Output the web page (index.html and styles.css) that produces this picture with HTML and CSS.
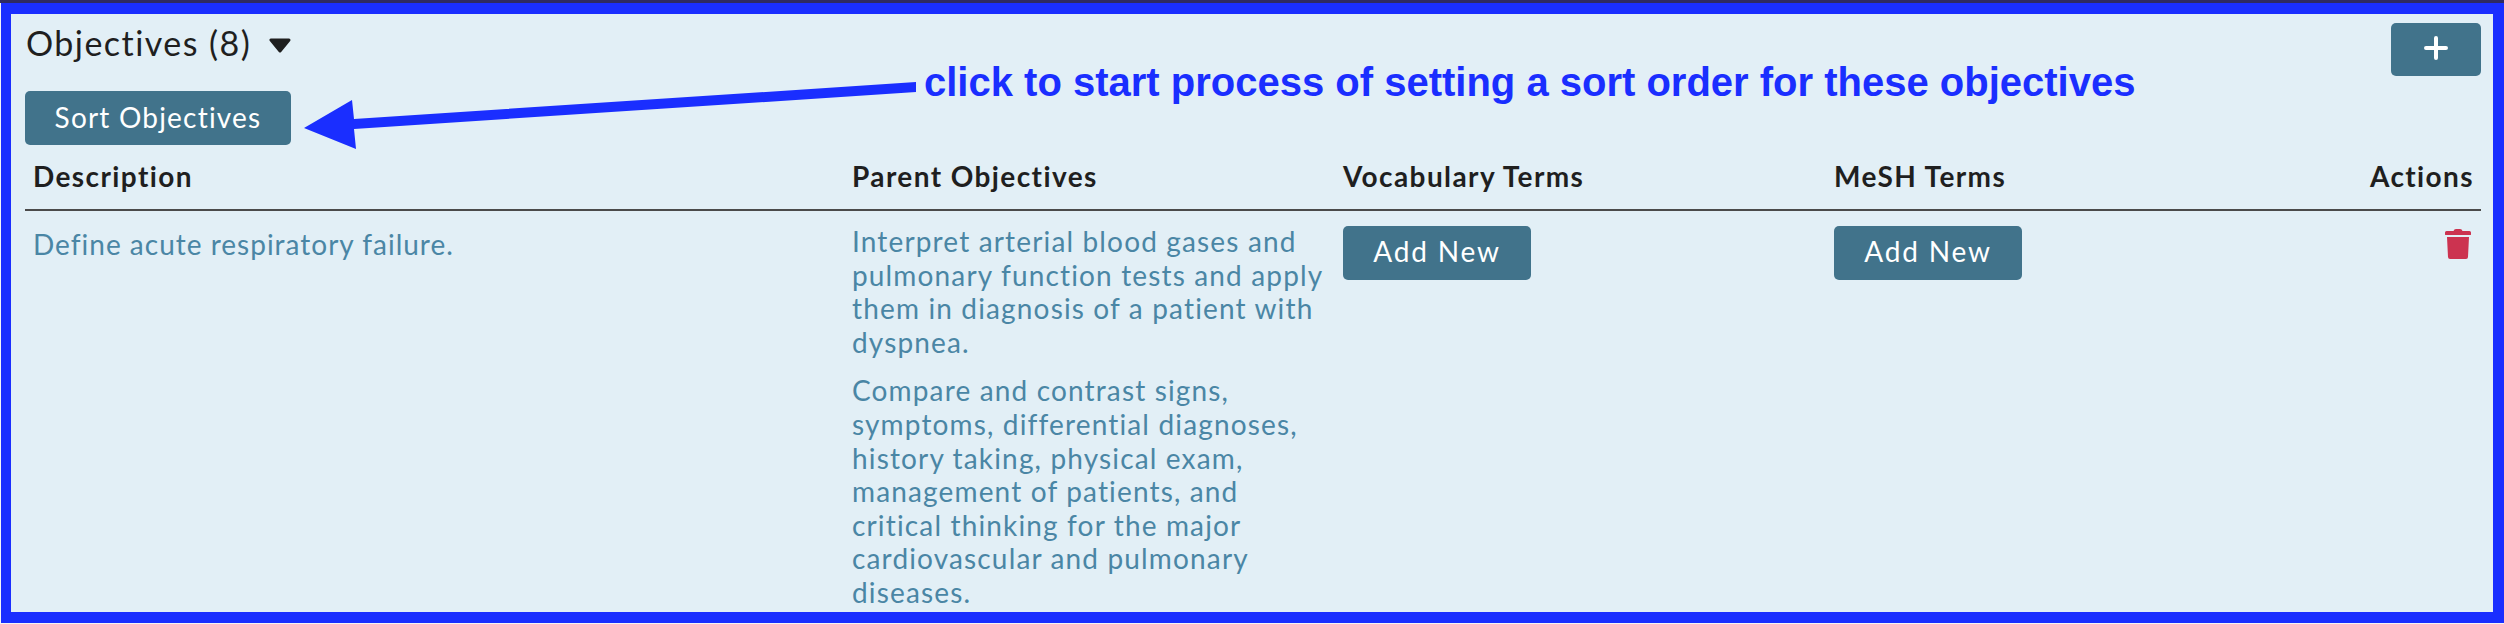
FILE: index.html
```html
<!DOCTYPE html>
<html lang="en">
<head>
  <meta charset="UTF-8">
  <title>Objectives</title>
  <link rel="stylesheet" href="styles.css">
</head>
<body>
  <div class="top-band"></div>
  <div class="frame">
    <div class="title-row">
      <h2 class="title">Objectives (8)
        <svg class="caret" width="22" height="15" viewBox="0 0 22 15"><path d="M2 2 H20 L11 13 Z" fill="#1f1f1f" stroke="#1f1f1f" stroke-width="3" stroke-linejoin="round"/></svg>
      </h2>
      <button class="btn btn-plus" aria-label="Add">
        <svg width="24" height="24" viewBox="0 0 24 24"><path d="M12 2 V22 M2 12 H22" stroke="#fff" stroke-width="4" stroke-linecap="round" fill="none"/></svg>
      </button>
    </div>
    <button class="btn btn-sort">Sort Objectives</button>
    <table class="objectives">
      <colgroup>
        <col class="col-desc">
        <col class="col-term">
        <col class="col-term">
        <col class="col-term">
        <col class="col-actions">
      </colgroup>
      <thead>
        <tr>
          <th>Description</th>
          <th>Parent Objectives</th>
          <th>Vocabulary Terms</th>
          <th>MeSH Terms</th>
          <th class="right">Actions</th>
        </tr>
      </thead>
      <tbody>
        <tr>
          <td class="desc">Define acute respiratory failure.</td>
          <td class="parents">
            <p>Interpret arterial blood gases and pulmonary function tests and apply them in diagnosis of a patient with dyspnea.</p>
            <p>Compare and contrast signs, symptoms, differential diagnoses, history taking, physical exam, management of patients, and critical thinking for the major cardiovascular and pulmonary diseases.</p>
          </td>
          <td class="terms"><button class="btn btn-add">Add New</button></td>
          <td class="terms"><button class="btn btn-add">Add New</button></td>
          <td class="right actions">
            <svg width="26" height="30" viewBox="0 0 26 30"><path d="M8.5 2 Q9 0 11 0 H15 Q17 0 17.500 2 H24.500 Q26 2 26 3.500 V5.500 Q26 6 25 6 H1 Q0 6 0 5.500 V3.500 Q0 2 1.500 2 Z M2 8 H24 L23 28 Q22.900 30 21 30 H5 Q3.100 30 3 28 Z" fill="#cc3350"/></svg>
          </td>
        </tr>
      </tbody>
    </table>

    <svg class="arrow" width="640" height="80" viewBox="0 0 640 80">
      <path d="M0 54 L48 26 L50 45 L612 8 L612 18 L50 55 L52 75 Z" fill="#1a2eff"/>
    </svg>
    <div class="note">click to start process of setting a sort order for these objectives</div>
  </div>
</body>
</html>
```

FILE: styles.css
```css
body {
  margin: 0;
  background: #f4f4f6;
  font-family: Lato, "Noto Sans", sans-serif;
}

.top-band {
  height: 3px;
  background: #2f2a62;
}

.frame {
  position: relative;
  box-sizing: border-box;
  height: 620px;
  margin-left: 1px;
  padding: 9px 12px 0 14px;
  overflow: hidden;
  background: #e2eff6;
  border: solid #1a2eff;
  border-width: 11px 11px 11px 10px;
}

.title-row {
  display: flex;
  justify-content: space-between;
  align-items: flex-start;
}

.title {
  margin: 0;
  padding-left: 1px;
  font-size: 34px;
  font-weight: 400;
  line-height: 40px;
  letter-spacing: 1.45px;
  color: #1f1f1f;
}

.caret {
  margin-left: 8px;
  vertical-align: 3px;
}

.btn {
  display: block;
  box-sizing: border-box;
  border: none;
  border-radius: 5px;
  background: #41738b;
  color: #fff;
  font-family: inherit;
  font-size: 28px;
  letter-spacing: 1.2px;
  padding: 0 0 4px;
}

.btn-plus {
  display: flex;
  align-items: center;
  justify-content: center;
  width: 90px;
  height: 53px;
}

.btn-sort {
  width: 266px;
  height: 54px;
  margin-top: 15px;
  padding-bottom: 2px;
}

.btn-add {
  width: 188px;
  height: 54px;
  letter-spacing: 1.8px;
}

.objectives {
  width: 2456px;
  table-layout: fixed;
  border-collapse: collapse;
  font-size: 28px;
  line-height: 33.6px;
  letter-spacing: 1px;
}

.col-desc { width: 818px; }
.col-term { width: 491px; }
.col-actions { width: 165px; }

.objectives th {
  height: 64px;
  padding: 0 9px;
  text-align: left;
  font-weight: 700;
  letter-spacing: 1.4px;
  color: #1f1f1f;
  border-bottom: 2px solid #4a4a4a;
}

.objectives th:first-child,
.objectives td:first-child {
  padding-left: 8px;
}

.objectives th.right {
  padding-right: 7px;
}

.objectives td {
  padding: 14px 9px 0;
  vertical-align: top;
  color: #4a86a5;
}

.objectives .right {
  text-align: right;
}

.objectives .desc {
  padding-top: 17px;
}

.objectives .parents {
  padding-right: 0;
  letter-spacing: 1.15px;
}

.parents p {
  margin: 0 0 15px;
}

.objectives .terms {
  padding-top: 15px;
}

.objectives .actions {
  padding-top: 18px;
  padding-right: 10px;
}

.arrow {
  position: absolute;
  left: 293px;
  top: 60px;
}

.note {
  position: absolute;
  left: 913px;
  top: 46px;
  font-family: "Liberation Sans", Arial, sans-serif;
  font-size: 40px;
  font-weight: 700;
  color: #1a2eff;
  white-space: nowrap;
}
```
